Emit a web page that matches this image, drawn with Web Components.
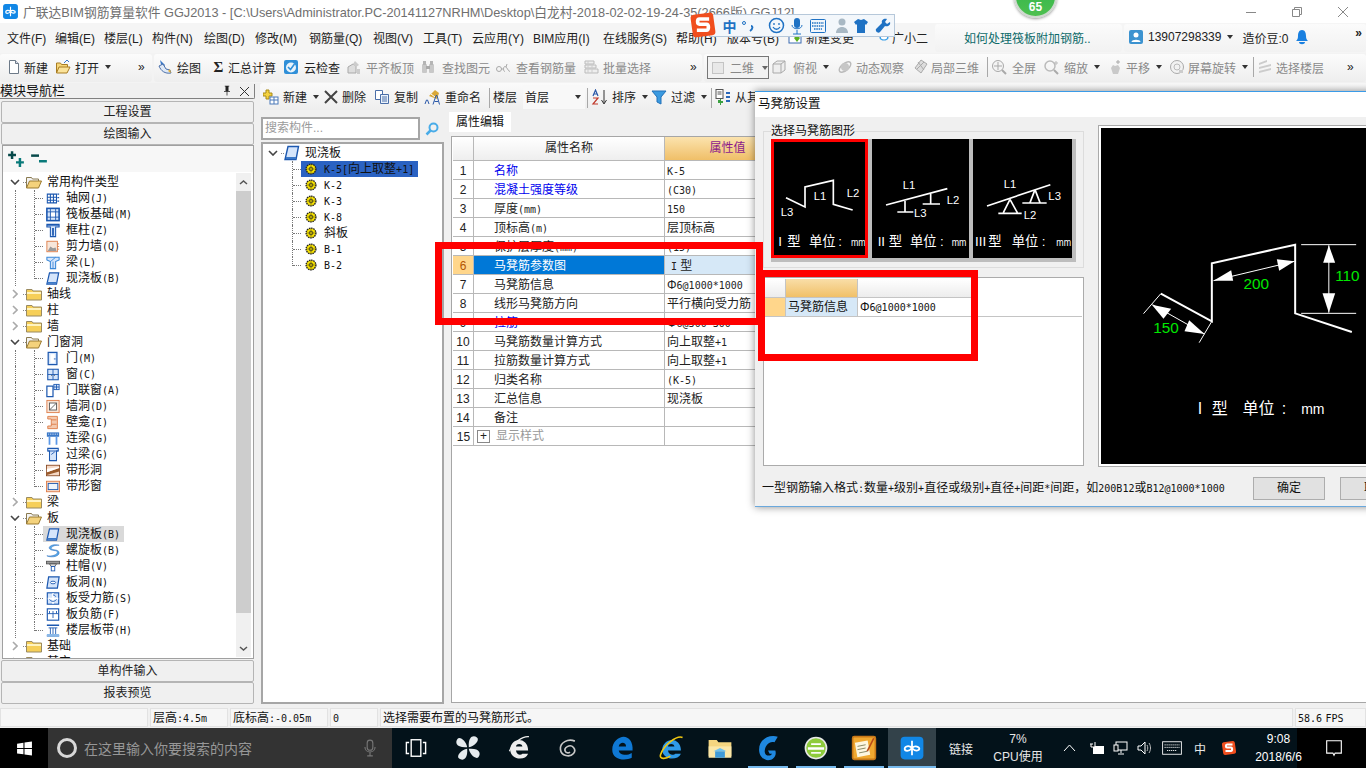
<!DOCTYPE html>
<html lang="zh">
<head>
<meta charset="utf-8">
<title>广联达BIM钢筋算量软件</title>
<style>
    html, body { margin: 0; width: 1366px; height: 768px; overflow: hidden; background: #f0f0f0; }
    body {
        display: grid;
        grid-template-rows: 23px 30px 30px 625px 20px 40px;
        font: 12px "Liberation Sans", "Noto Sans CJK SC", sans-serif;
        color: #222;
        position: relative;
    }
</style>
</head>
<body>
<title-bar></title-bar>
<menu-bar></menu-bar>

<tool-row>
    <tool-chunk style="width:152px;padding-left:6px">
        <tool-btn icon="new" label="新建" w="49" gap="2"></tool-btn>
        <tool-btn icon="open" label="打开" w="83" gap="4" caret></tool-btn>
        <tool-btn label="»" w="14"></tool-btn>
    </tool-chunk>
    <tool-chunk style="width:548px;padding-left:3px;margin-left:2px">
        <tool-btn icon="draw" label="绘图" w="56" gap="4"></tool-btn>
        <tool-btn glyph="Σ" label="汇总计算" w="70" iw="11" gap="4"></tool-btn>
        <tool-btn icon="cloud" label="云检查" w="63" gap="5"></tool-btn>
        <tool-btn icon="align" label="平齐板顶" w="74" gap="4" dim></tool-btn>
        <tool-btn icon="find" label="查找图元" w="75" gap="6" dim></tool-btn>
        <tool-btn icon="glasses" label="查看钢筋量" w="88" gap="5" dim></tool-btn>
        <tool-btn icon="batch" label="批量选择" w="107" gap="4" dim></tool-btn>
        <tool-btn label="»" w="12"></tool-btn>
    </tool-chunk>
    <tool-chunk style="flex:1;padding-left:3px;margin-left:2px">
        <view-combo label="二维"></view-combo>
        <tool-btn icon="cube" label="俯视" w="66" gap="6" caret dim></tool-btn>
        <tool-btn icon="orbit" label="动态观察" w="76" gap="3" dim></tool-btn>
        <tool-btn icon="cube3" label="局部三维" w="72" gap="2" dim></tool-btn>
        <tool-sep></tool-sep>
        <tool-btn icon="full" label="全屏" w="52" gap="5" dim></tool-btn>
        <tool-btn icon="zoom" label="缩放" w="64" gap="5" caret dim></tool-btn>
        <tool-btn icon="pan" label="平移" w="62" gap="3" caret dim></tool-btn>
        <tool-btn icon="rotate" label="屏幕旋转" w="82" gap="3" caret dim></tool-btn>
        <tool-sep></tool-sep>
        <tool-btn icon="floors" label="选择楼层" w="90" gap="3" dim></tool-btn>
        <tool-btn label="»" w="12"></tool-btn>
    </tool-chunk>
</tool-row>

<work-area>
    <nav-panel slot="nav"></nav-panel>
    <tool-row slot="tools" plain style="padding-left:3px">
        <tool-btn icon="add" label="新建" w="60" gap="4" caret></tool-btn>
        <tool-btn icon="del" label="删除" w="51" gap="3"></tool-btn>
        <tool-btn icon="copy" label="复制" w="50" gap="4"></tool-btn>
        <tool-btn icon="rename" label="重命名" w="63" gap="5"></tool-btn>
        <tool-sep></tool-sep>
        <tool-btn label="楼层" w="30"></tool-btn>
        <floor-combo label="首层"></floor-combo>
        <tool-sep></tool-sep>
        <tool-btn icon="sort" label="排序" w="60" iw="18" gap="3" caret></tool-btn>
        <tool-btn icon="filter" label="过滤" w="58" gap="4" caret></tool-btn>
        <tool-sep></tool-sep>
        <tool-btn icon="layer" label="从其" w="44" gap="4"></tool-btn>
    </tool-row>
    <comp-panel slot="comps"></comp-panel>
    <prop-panel slot="props"></prop-panel>
</work-area>

<status-bar></status-bar>
<win-taskbar></win-taskbar>

<score-badge></score-badge>
<ime-bar></ime-bar>
<rebar-dialog></rebar-dialog>
<red-frame box="435,242,328,83"></red-frame>
<red-frame box="758,270,220,91"></red-frame>

<script>
const CJK = '"Noto Sans CJK SC"';

// SimSun style text: latin is half a CJK cell wide
function sim(s) {
    return s.replace(/[\x21-\x7e]+/g, m => `<span class="a">${m}</span>`);
}
const SIM_CSS = `.a { font-family: "DejaVu Sans Mono", monospace; font-size: 10px; }`;

const B = '#1c58b0', L = '#d5e5fb', O = '#dd7a45', G = '#a9a9a9';
const ICONS = {
    new: `<path d="M3.5 1.5h6l3 3v10h-9z" fill="#fff" stroke="#6d7a88"/><path d="M9.5 1.5v3h3" fill="#dde" stroke="#6d7a88"/>`,
    open: `<path d="M1.5 14V4h4l1 1.5h6V8" fill="#f6d67a" stroke="#a87c22"/><path d="M1.5 14l2.500-6h11l-3 6z" fill="#fbe39a" stroke="#a87c22"/><path d="M9 4l3-3 2 2" fill="none" stroke="#3a78c8"/>`,
    draw: `<path d="M3 1l5 5-3 4z" fill="#3a78c8"/><path d="M2 7c2 5 6 8 12 7l-1-3-4-1-3-5z" fill="#dfe9f6" stroke="#4a6ea8"/><path d="M11 12l3 2-1-4z" fill="#e8b030"/>`,
    cloud: `<rect x="1" y="1" width="14" height="14" rx="2" fill="#2f8fd8"/><circle cx="8" cy="8.500" r="5" fill="#e8f3fb"/><path d="M5 8l2.500 2.500L11.500 5" fill="none" stroke="#2f8fd8" stroke-width="1.600"/>`,
    align: `<path d="M2 14V8l5-3 3 2v7z" fill="#ddd" stroke="${G}"/><path d="M9 2l4 4-3 2-3-3z" fill="#ccc"/><path d="M11 10h3v5h-3z" fill="#ccc"/>`,
    find: `<rect x="2" y="5" width="5" height="9" rx="1" fill="#c8c8c8"/><rect x="9" y="5" width="5" height="9" rx="1" fill="#c8c8c8"/><rect x="3" y="2" width="3" height="4" fill="#b5b5b5"/><rect x="10" y="2" width="3" height="4" fill="#b5b5b5"/><rect x="6" y="7" width="4" height="3" fill="#aaa"/>`,
    glasses: `<circle cx="4" cy="10" r="2.500" fill="none" stroke="${G}"/><path d="M10 12.500c-2 0-2-5 0-5s3 5 5 5M6 10h2M12 5l-1 3" fill="none" stroke="${G}"/>`,
    batch: `<path d="M2 2h9v3H2zM2 6h11v3H2zM2 10h13v4H2z" fill="#eee" stroke="#bbb"/><path d="M5 2v12M9 6v8" stroke="#ccc"/>`,
    cube: `<path d="M2 5l4-3h8v9l-4 3H2z" fill="#eee" stroke="${G}"/><path d="M2 5h8v9M10 5l4-3" fill="none" stroke="${G}"/>`,
    orbit: `<ellipse cx="8" cy="8" rx="7" ry="3.500" transform="rotate(-40 8 8)" fill="none" stroke="#bbb" stroke-width="1.500"/><circle cx="8" cy="8" r="4" fill="#c6c6c6"/>`,
    cube3: `<path d="M8 1l6 4-6 9-6-5z" fill="#ddd" stroke="#aaa"/><path d="M5 3l6 8M11 3l-7 7" stroke="#aaa"/>`,
    full: `<circle cx="7" cy="7" r="5.500" fill="#f4f4f4" stroke="${G}"/><path d="M7 3v8M3 7h8" stroke="${G}"/><path d="M11 11l4 4" stroke="${G}" stroke-width="2"/>`,
    zoom: `<circle cx="7" cy="7" r="5" fill="none" stroke="#bbb" stroke-width="1.500"/><path d="M11 11l4 4" stroke="#aaa" stroke-width="2"/><path d="M13 2v4M11 4h4" stroke="#bbb"/>`,
    pan: `<path d="M4 9l2-3 2 1 3-1 2 3-2 6H6z" fill="#c9c9c9"/><path d="M11 1v4M9 3h4" stroke="${G}"/>`,
    rotate: `<circle cx="8" cy="8" r="6.500" fill="#f2f2f2" stroke="${G}"/><circle cx="8" cy="8" r="3" fill="none" stroke="#bbb"/><path d="M10 11h4v3h-4z" fill="#ccc"/>`,
    floors: `<path d="M2 4l8-3v2l-8 3zM2 8l12-3v2L2 10zM2 12l12-3v2l-12 3z" fill="#ccc"/>`,
    add: `<path d="M3 1h3v3h3v3H6v3H3V7H0V4h3z" fill="#f4d240" stroke="#a88a18"/><rect x="7" y="8" width="8" height="7" fill="#fff" stroke="#4a78b8"/><path d="M7 11h8M11 8v7" stroke="#4a78b8"/>`,
    del: `<path d="M2 2l12 12M14 2L2 14" stroke="#444" stroke-width="2"/>`,
    copy: `<path d="M1.500 1.500h7v9h-7z" fill="#fff" stroke="#4a6ea8"/><path d="M6.500 5.500h8v9h-8z" fill="#eaf2fb" stroke="#4a6ea8"/><path d="M8 8h5M8 10h5M8 12h5" stroke="#4a6ea8"/>`,
    rename: `<path d="M5 7l6-6 4 3-2 6z" fill="#d9a838"/><path d="M7 5l4 3" stroke="#fff"/>
        <path d="M1 15l1.500-4h1L5 15M9 15.500l3-9h1l2.500 9M10.500 12.500h3.500" fill="none" stroke="#2a58a8"/>`,
    sort: `<path d="M1 7l2.500-6L6 7M1.800 5h3.400" fill="none" stroke="#2a58a8" stroke-width="1.200"/><path d="M1 9h5L1 15h5" fill="none" stroke="#c0392b" stroke-width="1.200"/><path d="M12 1v13M9.500 11l2.500 4 2.500-4" fill="none" stroke="#333"/>`,
    filter: `<path d="M1 2h14L10 8v7l-4-2V8z" fill="#3a9ae0" stroke="#2270b8"/>`,
    layer: `<rect x="1" y="0.500" width="7" height="9" fill="#fff" stroke="#555"/><path d="M2.500 3h4M2.500 5h4" stroke="#555"/><path d="M3 11h2v-1h1v2h2v2H6v2H5v-2H3z" fill="#3aa040"/><path d="M11 3h4v2h-4zM11 7h4v2h-4zM11 11h4v2h-4z" fill="#2a68b8"/>`,
    folderOpen: `<path d="M0.500 14V3.500h5l1 1.500h6v2" fill="#f3f3f3" stroke="#8a7a50"/><path d="M0.500 14l3-7h12l-3 7z" fill="#f4d27c" stroke="#9a7a30"/>`,
    folder: `<path d="M0.500 14V3.500h5.500l1 1.500h8.500v9z" fill="#f6cf58" stroke="#9a8a60"/><path d="M1 6h14v2H1z" fill="#fff3bf"/>`,
    grid: `<path d="M1.500 3h10.500v10H1.500zM1.500 6.500h10.500M1.500 10h10.500M5 3v10M8.500 3v10" fill="none" stroke="${B}" stroke-width="1.200"/><path d="M13 3h2M13 7h2M13 11h2" stroke="${B}" stroke-width="1.500"/>`,
    raft: `<rect x="1" y="1" width="14" height="14" fill="${L}" stroke="${B}" stroke-width="1.800"/><rect x="5" y="5" width="6" height="6" fill="#fff" stroke="${B}"/><path d="M1 5h4M11 5h4M1 11h4M11 11h4M5 1v4M11 1v4M5 11v4M11 11v4" stroke="${B}"/>`,
    column: `<path d="M1 1h14v3H11v11H5V4H1z" fill="${L}" stroke="${B}" stroke-width="1.200"/><path d="M1 2.500h14" stroke="${B}"/><path d="M7 5h2v9H7z" fill="${B}"/>`,
    wall: `<rect x="1" y="2" width="12" height="12" fill="#f7e6da" stroke="${O}"/><path d="M2 13l3-5 3 2 3-1 1 4z" fill="#9a9a9a"/><path d="M13 5h2M13 8h2M13 11h2" stroke="${O}"/>`,
    beam: `<path d="M1 2h14v3l-4 2v8H5V7L1 5z" fill="${L}" stroke="#3a88d8" stroke-width="1.200"/><path d="M5 7l6-5M8 7v8" stroke="#3a88d8"/>`,
    slab: `<path d="M4 1.500h10.500L12 14.500H1z" fill="${L}" stroke="${B}" stroke-width="1.400"/><path d="M2 13h10" stroke="#3a78c8" stroke-width="2"/>`,
    door: `<rect x="2.500" y="1" width="10" height="14" fill="${L}" stroke="${B}" stroke-width="1.400"/><rect x="5" y="3" width="5" height="10" fill="#fff"/><rect x="9" y="8" width="2" height="1" fill="${B}"/>`,
    win: `<rect x="2" y="2" width="12" height="12" fill="${L}" stroke="${B}" stroke-width="1.200"/><path d="M8 2v12M2 8h12" stroke="${B}"/><path d="M6 9h1M9 9h1" stroke="#333"/>`,
    doorwin: `<rect x="1" y="3" width="7" height="12" fill="#fff" stroke="${B}" stroke-width="1.400"/><rect x="9" y="1" width="6" height="6" fill="${L}" stroke="${B}"/><path d="M12 1v6M9 4h6" stroke="${B}"/>`,
    hole: `<rect x="1" y="1" width="14" height="14" fill="#f8e4d6" stroke="${O}"/><rect x="4" y="4" width="8" height="8" fill="#fff" stroke="#555"/><path d="M4 12l8-8" stroke="#555"/>`,
    niche: `<path d="M2 1h11v14H2v-3h4V4H2z" fill="#f4c9ae" stroke="${O}"/><path d="M6 5h6M6 10h6" stroke="${O}"/>`,
    lbeam: `<rect x="1" y="1" width="14" height="5" fill="#3a78c8"/><path d="M2.500 3h11" stroke="#fff" stroke-dasharray="1 1"/><path d="M4 6v9M12 6v9" stroke="#5a98e8" stroke-width="2"/>`,
    lintel: `<path d="M2 1h12v3h-2v11H4V4H2z" fill="${L}" stroke="${B}" stroke-width="1.200"/><path d="M2 4h12M6 8l4-3" stroke="${B}"/>`,
    shole: `<rect x="0.500" y="2" width="15" height="12" fill="#f5d8c4" stroke="#884822"/><path d="M1 10l14-5v4L1 13z" fill="#9a5a2a"/><path d="M1 6l14-2v1L1 10z" fill="#fff"/>`,
    swin: `<rect x="0.500" y="2" width="15" height="12" fill="#f3d6c6" stroke="${O}"/><rect x="2.500" y="4.500" width="11" height="7" fill="#eef4fc" stroke="${B}"/>`,
    spiral: `<path d="M15 2C9 0 2 3 4 6s9 1 9 4-7 5-12 4c3 2 13 2 14-3S4 8 6 5s6-3 9-3z" fill="#58a8e8" stroke="#2a70c0" stroke-width=".6"/>`,
    cap: `<rect x="0.500" y="2" width="15" height="3" fill="#999" stroke="#555"/><path d="M4 5h8l-2 3H6z" fill="#ddd" stroke="#555"/><rect x="6" y="8" width="4" height="5" fill="#fff" stroke="#1c58b0"/>`,
    slabhole: `<path d="M3 1.500h12L13 14.500H1z" fill="${L}" stroke="${B}" stroke-width="1.400"/><ellipse cx="8" cy="8" rx="3" ry="1.500" fill="#fff" stroke="${B}"/>`,
    srebar: `<rect x="1.500" y="1.500" width="13" height="13" fill="${L}" stroke="${B}" stroke-width="1.300"/><path d="M2 8h12M8 2v12" stroke="#fff" stroke-width="2"/><path d="M4 9c2 3 6 3 8 0M8 4c2 0 3 1 3 2" fill="none" stroke="${B}"/>`,
    nrebar: `<rect x="1.500" y="1.500" width="13" height="13" fill="#fff" stroke="${B}" stroke-width="1.300"/><path d="M2 7h12M8 4v8M4 4v3M12 4v3" fill="none" stroke="${B}"/>`,
    band: `<path d="M1 2h14M1 14h14" stroke="${B}" stroke-width="1.600"/><path d="M3 5h10M5 5v7M8 5v7M11 5v7" stroke="${B}"/><rect x="1" y="12" width="14" height="3" fill="#8ab8e8"/>`,
    gear: `<circle cx="8" cy="8" r="6.500" fill="#f5e000" stroke="#222" stroke-width="1.800" stroke-dasharray="2 1"/><circle cx="8" cy="8" r="2.500" fill="none" stroke="#222"/><path d="M8 1v14M1 8h14" stroke="#222" stroke-width=".5"/>`,
    win10: `<path d="M1 3.500l6-.9v5H1zM8 2.400l7-1v6.200H8zM1 8.500h6v5l-6-.9zM8 8.500h7v6.200l-7-1z" fill="#fff"/>`,
    mic: `<rect x="5.500" y="1" width="5" height="9" rx="2.500" fill="none" stroke="#777"/><path d="M3.500 7c0 6 9 6 9 0M8 12v3M5.500 15h5" fill="none" stroke="#777"/>`,
    taskview: `<rect x="4.500" y="2" width="7" height="12" fill="none" stroke="#fff"/><path d="M3 4H1v8h2M13 4h2v8h-2" fill="none" stroke="#fff"/>`,
    fan: `<path d="M7.500 7.500C7 4 3 .5 1.500 2.500S.5 8 7.500 7.500zM8.500 7.500C12 7 15.500 3 13.500 1.500S8 .5 8.500 7.500zM7.500 8.500C4 9 .5 13 2.500 14.500S8 15.500 7.500 8.500zM8.500 8.500C9 12 13 15.500 14.500 13.500S15.500 8 8.500 8.500z" fill="#e6ebee"/>`,
    ie: `<path d="M2 9.500h11C13 5 10 3 7.500 3 4.500 3 2 5.500 2 9c0 3.500 3 5.500 6 5.500 2.500 0 4-1 5-3H9.500c-1 1.200-3.500 1-4-2zM5.500 7c.5-2 3.500-2 4 0z" fill="#eee"/><path d="M13.500 1c-4-.5-10 4-12 9" fill="none" stroke="#eee" stroke-width=".8"/>`,
    swirl: `<path d="M13 3C8 1 2 4 2.500 9s7 6 9.500 3-1-7-4.500-5-1 6 2 4" fill="none" stroke="#c8c8c8" stroke-width="1.200"/>`,
    edge: `<path d="M2 9c0-5 4-8 7-8s6 3 5.500 8.500H6c.5 3 5 3.500 8 1.500v3c-4 2-12 1.500-12-5zM6 7h4.500c0-3-4-3-4.500 0z" fill="#0f78d4"/>`,
    ie2: `<path d="M2 9.500h11.500C13.500 5 10.500 3 8 3 5 3 2 5.500 2 9c0 3.500 3 5.500 6 5.500 2.500 0 4.500-1 5.500-3H10c-1 1.200-4 1-4.500-2zM5.500 7c.5-2 3.500-2 4 0z" fill="#2f9ae8"/><path d="M14.500 1.500C11 0 3 6 1 12c-1 3 3 3 6 1" fill="none" stroke="#f2c811"/>`,
    explorer: `<path d="M1 3h5l1 1.500h8V13H1z" fill="#f4d580"/><path d="M1 7h14v7H1z" fill="#fbe7a8"/><path d="M5 10h6v4H5z" fill="#3f9ad8"/><path d="M4 10l4-2 4 2z" fill="#6fc0ee"/>`,
    gapp: `<path d="M14 1C8-.5 2.500 3 2.500 9c0 4 3 6.500 5.500 6.500 3.500 0 5.500-3 4.500-6H8l1 2h1.500c-1 2-5 1.500-4.500-2S9 3.500 12 4.500z" fill="#1f88e0"/>`,
    greenie: `<circle cx="8" cy="8" r="6.500" fill="#8ecb3c" stroke="#e8e8e8"/><path d="M3 7.500h10v1.500H3zM5 5h6v1.200H5z" fill="#fff"/><path d="M5 11h6" stroke="#fff"/>`,
    notes: `<rect x="1" y="1" width="14" height="14" rx="1" fill="#f0a830" stroke="#c87818"/><rect x="3" y="4" width="8" height="9" fill="#fdf6e0" transform="rotate(-10 7 8)"/><path d="M4 7l5-1M4 9l5-1M5 11l5-1" stroke="#886" stroke-width=".6"/><path d="M14 2l-4 8" stroke="#b84a18"/>`,
    ggj: `<rect x="1" y="1" width="14" height="14" rx="2.500" fill="#1187e6"/><path d="M8 3.500v9M8 8c-2-2-4.500-1-4.500.5S6 10.500 8 8c2 2.500 4.500 1.500 4.500.5S10 6 8 8z" fill="none" stroke="#fff" stroke-width="1.100"/>`,
    battery: `<rect x="4" y="6" width="11" height="8" fill="#fff"/><path d="M6 2v4M2 4v3h4M1 4h3" stroke="#fff"/>`,
    network: `<rect x="3" y="2" width="11" height="8" fill="none" stroke="#fff"/><rect x="1" y="5" width="4" height="6" fill="#0a1418" stroke="#fff"/><path d="M8 10v3M5 14h6" stroke="#fff"/>`,
    speaker: `<path d="M2 6h3l4-4v12l-4-4H2z" fill="none" stroke="#fff"/><path d="M11 5c1 2 1 4 0 6M13 3c2 3 2 7 0 10" fill="none" stroke="#bbb"/>`,
    keyboard: `<rect x="0.500" y="3" width="15" height="10" fill="none" stroke="#fff" stroke-width=".7"/><path d="M2 5.500h12M2 7.500h12M4 10h8" stroke="#fff" stroke-width=".7" stroke-dasharray="1 .6"/>`,
    sogou: `<rect x="1.500" y="1.500" width="13" height="13" rx="2" fill="#f04e1e" transform="rotate(-8 8 8)"/><path d="M11.500 4.500H6c-1.500 0-1.500 3 0 3h4c1.500 0 1.500 3.500 0 3.500H4.500" fill="none" stroke="#fff" stroke-width="2"/>`,
    note: `<path d="M1.500 1.500h13v11H9l-1 2-1-2H1.500z" fill="none" stroke="#fff"/>`,
    user: `<rect x="1" y="1" width="14" height="14" rx="2" fill="#3c93d0"/><circle cx="8" cy="6" r="2.500" fill="#fff"/><path d="M3.500 13c0-3 9-3 9 0z" fill="#fff"/>`,
    bell: `<path d="M8 1c-3 0-4 3-4 6s-1 4-2 5h12c-1-1-2-2-2-5s-1-6-4-6z" fill="#1a80e0"/><path d="M5 13h6c0 3-6 3-6 0z" fill="#1a80e0"/>`,
    change: `<rect x="1" y="2" width="12" height="12" fill="#fff" stroke="#3a6ab0"/><path d="M9 6l3 3-3 4-3-4z" fill="#5ab020"/>`,
    robot: `<path d="M2 5c0-5 12-5 12 0v4c0 5-12 5-12 0z" fill="#3aa0e8"/><path d="M4 6h8v3c0 3-8 3-8 0z" fill="#fff"/>`,
    search: `<circle cx="9.500" cy="6.500" r="4" fill="none" stroke="#49ace8" stroke-width="2"/><path d="M6.500 9.500l-4 4" stroke="#49ace8" stroke-width="2.500"/>`,
    plusplus: `<path d="M4.500 1v7M1 4.500h7" stroke="#07494a" stroke-width="2.200"/><path d="M11.500 7v8M8 11h7" stroke="#0a7a7a" stroke-width="2.200"/>`,
    minusminus: `<path d="M1 5h7" stroke="#07494a" stroke-width="2.200"/><path d="M8 10h7" stroke="#0a7a7a" stroke-width="2.200"/>`,
    pin: `<path d="M5 1h6v1H10v6h2v1H8.500v5h-1V9H4V8h2V2H5z" fill="#222"/>`
};

function icon(name, w = 16, h = w) {
    return `<svg viewBox="0 0 16 16" width="${w}" height="${h}" aria-hidden="true">${ICONS[name] || ''}</svg>`;
}

class Base extends HTMLElement {
    constructor() {
        super();
        this.attachShadow({ mode: 'open' });
    }
    connectedCallback() {
        this.shadowRoot.innerHTML = this.markup();
    }
}

class TitleBar extends Base {
    markup() {
        return `<style>
            :host { display: flex; align-items: center; background: #fff; color: #6f6f6f; overflow: hidden; white-space: nowrap; }
            .ico { margin: 0 4px 0 2px; display: flex; }
            .t { flex: 1; font-size: 12.750px; }
            .c { width: 46px; height: 23px; display: flex; align-items: center; justify-content: center; }
            svg { display: block; }
        </style>
        <span class="ico">${icon('ggj', 17)}</span>
        <span class="t">广联达BIM钢筋算量软件 GGJ2013 - [C:\\Users\\Administrator.PC-20141127NRHM\\Desktop\\白龙村-2018-02-02-19-24-35(2666版).GGJ12]</span>
        <span class="c"><svg width="10" height="10"><path d="M0 5.500h10" stroke="#888"/></svg></span>
        <span class="c"><svg width="10" height="10"><path d="M.5 2.500h7v7h-7zM2.500 2.500v-2h7v7h-2" fill="none" stroke="#888"/></svg></span>
        <span class="c"><svg width="10" height="10"><path d="M0 0l10 10M10 0L0 10" stroke="#888"/></svg></span>`;
    }
}

class MenuBar extends Base {
    markup() {
        const items = [['文件(F)', 48], ['编辑(E)', 49], ['楼层(L)', 48], ['构件(N)', 52], ['绘图(D)', 51], ['修改(M)', 54],
            ['钢筋量(Q)', 64], ['视图(V)', 50], ['工具(T)', 49], ['云应用(Y)', 61], ['BIM应用(I)', 70], ['在线服务(S)', 73],
            ['帮助(H)', 51], ['版本号(B)', 61]];
        return `<style>
            :host { display: flex; align-items: center; background: #f5f5f5; padding-left: 7px; white-space: nowrap; color: #222; }
            span { flex: none; }
            svg { display: block; }
            .lb { padding-bottom: 2px; }
            .i { display: flex; align-items: center; gap: 2px; padding-bottom: 2px; }
            .tip, .me { height: 28px; border-radius: 3px; background: linear-gradient(#fbfbfb, #f2f2f2); display: flex; align-items: center; box-sizing: border-box; padding-bottom: 2px; }
            .tip { width: 187px; margin-left: 7px; color: #0c6a6a; padding-left: 29px; }
            .me { flex: 1; margin-left: 2px; padding-left: 4px; position: relative; }
            .caret { width: 0; height: 0; border: 3px solid transparent; border-top: 4px solid #333; border-bottom: 0; margin: 0 9px 0 6px; }
            .more { position: absolute; right: 4px; top: 2px; line-height: 14px; font-weight: 700; }
        </style>
        ${items.map(([t, w]) => `<span class="lb" style="width:${w}px">${t}</span>`).join('')}
        <span class="i" style="width:90px">${icon('change', 16)}新建变更</span>
        <span class="i" style="width:50px">${icon('robot', 12)}广小二</span>
        <span class="tip">如何处理筏板附加钢筋..</span>
        <span class="me">${icon('user', 16)}<span style="margin-left:4px">13907298339</span><i class="caret"></i>造价豆:0<span style="margin-left:6px">${icon('bell', 16)}</span><span class="more">»</span></span>`;
    }
}

class ToolRow extends Base {
    markup() {
        const plain = this.hasAttribute('plain');
        return `<style>
            :host { display: flex; align-items: ${plain ? 'center' : 'flex-start'}; white-space: nowrap; overflow: hidden; box-sizing: border-box;
                background: ${plain ? 'linear-gradient(#fafafa, #eeeeee)' : '#f3f3f3'}; ${plain ? 'border-radius: 3px 0 0 0;' : 'padding-top: 1px;'} }
        </style><slot></slot>`;
    }
}

class ToolChunk extends Base {
    markup() {
        return `<style>
            :host { display: flex; align-items: flex-start; flex: none; box-sizing: border-box; height: 28px; border-radius: 3px; background: linear-gradient(#fcfcfc, #eeeeee); overflow: hidden; }
        </style><slot></slot>`;
    }
}

class ToolBtn extends Base {
    markup() {
        const w = this.getAttribute('w');
        const iw = this.getAttribute('iw') || 16;
        const gap = this.getAttribute('gap') || 0;
        const ico = this.getAttribute('icon');
        const glyph = this.getAttribute('glyph');
        const caret = this.hasAttribute('caret');
        const dim = this.hasAttribute('dim');
        return `<style>
            :host { display: flex; align-items: center; flex: none; width: ${w}px; height: 26px; color: ${dim ? '#8a8a8a' : '#222'}; overflow: hidden; }
            .i { width: ${iw}px; flex: none; display: flex; align-items: center; justify-content: center; margin-right: ${gap}px; font: 700 15px "Liberation Serif", serif; }
            svg { display: block; }
            .c { width: 0; height: 0; border: 3px solid transparent; border-top: 4px solid #333; border-bottom: 0; margin-left: 6px; }
        </style>
        ${ico ? `<span class="i">${icon(ico, +iw, 16)}</span>` : ''}
        ${glyph ? `<span class="i">${glyph}</span>` : ''}
        <span>${this.getAttribute('label')}</span>
        ${caret ? '<i class="c"></i>' : ''}`;
    }
}

class ToolSep extends Base {
    markup() {
        return `<style>:host { display: block; flex: none; width: 1px; height: 20px; background: #a8a8a8; margin: 3px 3px 0 2px; }</style>`;
    }
}

class ViewCombo extends Base {
    markup() {
        return `<style>
            :host { display: flex; align-items: center; flex: none; box-sizing: border-box; width: 62px; height: 23px; margin: 2px 2px 0 0; border: 1px solid #777; color: #888; background: #f2f2f2; }
            i { width: 13px; height: 12px; margin: 0 6px 0 4px; background: #e8e8e8; border: 1px solid #c4c4c4; box-sizing: border-box; }
            b { width: 0; height: 0; border: 3px solid transparent; border-top: 4px solid #666; border-bottom: 0; margin-left: 8px; }
        </style><i></i><span>${this.getAttribute('label')}</span><b></b>`;
    }
}

class FloorCombo extends Base {
    markup() {
        return `<style>
            :host { display: flex; align-items: center; flex: none; box-sizing: border-box; width: 62px; height: 24px; background: #f8f8f8; padding-left: 2px; }
            b { width: 0; height: 0; border: 3px solid transparent; border-top: 4px solid #333; border-bottom: 0; margin-left: auto; margin-right: 4px; }
        </style><span>${this.getAttribute('label')}</span><b></b>`;
    }
}

class WorkArea extends Base {
    markup() {
        return `<style>
            :host { display: grid; grid-template-columns: 255px 5px 187px 1fr; grid-template-rows: 27px 594px; min-height: 0; overflow: hidden; background: #f0f0f0; }
            ::slotted([slot=nav]) { grid-column: 1; grid-row: 1 / 3; }
            ::slotted([slot=tools]) { grid-column: 3 / 5; grid-row: 1; }
            ::slotted([slot=comps]) { grid-column: 3; grid-row: 2; }
            ::slotted([slot=props]) { grid-column: 4; grid-row: 2; }
        </style>
        <slot name="nav"></slot><slot name="tools"></slot><slot name="comps"></slot><slot name="props"></slot>`;
    }
}

class NavPanel extends Base {
    markup() {
        const btn = t => `<div class="btn">${t}</div>`;
        return `<style>
            :host { display: flex; flex-direction: column; min-height: 0; box-sizing: border-box; padding-top: 1px; }
            .head { height: 14px; display: flex; align-items: center; font-size: 13px; line-height: 14px; border-bottom: 1px solid #808080; border-right: 1px solid #808080; border-radius: 0 0 2px 0; overflow: hidden; margin-bottom: 2px; flex: none; }
            .head span { flex: 1; color: #111; }
            .head svg { display: block; margin-right: 4px; }
            .btn { flex: none; margin: 0 1px; text-align: center; background: #f0f0f0; border: 1px solid #b5b5b5; height: 20px; line-height: 20px; color: #222; border-radius: 2px; }
            .box { flex: 1; min-height: 0; margin: 0 1px 1px 2px; border: 1px solid #a0a0a0; display: flex; flex-direction: column; }
            .tools { height: 26px; background: #f7f7f7; display: flex; align-items: center; gap: 5px; padding-left: 4px; flex: none; }
            .tools svg { display: block; }
            comp-tree { flex: 1; min-height: 0; }
        </style>
        <div class="head"><span>模块导航栏</span>${icon('pin', 12)}<svg width="9" height="9" style="margin:0 5px 0 3px"><path d="M0 0l9 9M9 0L0 9" stroke="#333"/></svg></div>
        ${btn('工程设置')}${btn('绘图输入')}
        <div class="box">
            <div class="tools">${icon('plusplus', 18)}${icon('minusminus', 18)}</div>
            <comp-tree which="nav" style="--ox:4px"></comp-tree>
        </div>
        ${btn('单构件输入')}${btn('报表预览')}`;
    }
}

const NAV_TREE = [
    ['open', '常用构件类型', [['grid', '轴网(J)'], ['raft', '筏板基础(M)'], ['column', '框柱(Z)'], ['wall', '剪力墙(Q)'], ['beam', '梁(L)'], ['slab', '现浇板(B)']]],
    ['closed', '轴线'], ['closed', '柱'], ['closed', '墙'],
    ['open', '门窗洞', [['door', '门(M)'], ['win', '窗(C)'], ['doorwin', '门联窗(A)'], ['hole', '墙洞(D)'], ['niche', '壁龛(I)'], ['lbeam', '连梁(G)'], ['lintel', '过梁(G)'], ['shole', '带形洞'], ['swin', '带形窗']]],
    ['closed', '梁'],
    ['open', '板', [['slab', '现浇板(B)', 'grey'], ['spiral', '螺旋板(B)'], ['cap', '柱帽(V)'], ['slabhole', '板洞(N)'], ['srebar', '板受力筋(S)'], ['nrebar', '板负筋(F)'], ['band', '楼层板带(H)']]],
    ['closed', '基础'], ['closed', '其它']
];
const COMP_TREE = [
    ['slab', '现浇板', [['gear', 'K-5[向上取整+1]', 'blue'], ['gear', 'K-2'], ['gear', 'K-3'], ['gear', 'K-8'], ['gear', '斜板'], ['gear', 'B-1'], ['gear', 'B-2']], 'solo']
];

class CompTree extends Base {
    row(kind, label, kids, solo) {
        const open = !!kids;
        const ic = kind === 'open' ? 'folderOpen' : kind === 'closed' ? 'folder' : kind;
        const chev = open
            ? '<svg width="10" height="6"><path d="M1 1l4 4 4-4" fill="none" stroke="#444" stroke-width="1.600"/></svg>'
            : '<svg width="6" height="10"><path d="M1 1l4 4-4 4" fill="none" stroke="#aaa" stroke-width="1.600"/></svg>';
        let html = `<div class="r"><span class="ch">${chev}</span><span class="d"></span><span class="ic">${icon(ic)}</span><span class="tx" style="margin-left:5px">${sim(label)}</span></div>`;
        (kids || []).forEach((k, i) => {
            const last = i === kids.length - 1;
            const cls = k[2] ? ` ${k[2]}` : '';
            const size = k[0] === 'gear' ? 12 : 15;
            html += `<div class="r"><span class="g1${solo ? ' none' : ''}"></span><span class="g2${last ? ' last' : ''}"><i></i></span>
                <span class="it${cls}"><span class="ic2">${icon(k[0], size)}</span><span class="tx">${sim(k[1])}</span></span></div>`;
        });
        return html;
    }
    markup() {
        const nav = this.getAttribute('which') === 'nav';
        const data = nav ? NAV_TREE : COMP_TREE;
        return `<style>
            :host { display: flex; background: #fff; overflow: hidden; color: #111; }
            ${SIM_CSS}
            .list { flex: 1; min-width: 0; padding: ${nav ? 2 : 1}px 0 0 var(--ox, 0); overflow: hidden; }
            .r { display: flex; align-items: center; height: 16px; white-space: nowrap; line-height: 16px; }
            .ch { width: 15px; flex: none; display: flex; justify-content: center; }
            .d { width: 3px; margin-left: 1px; flex: none; border-top: 1px dotted #888; }
            .ic { width: 16px; flex: none; display: flex; }
            svg { display: block; }
            .g1 { flex: none; width: 18px; height: 16px; margin-left: 8px; border-left: 1px dotted #777; }
            .g1.none { border-color: transparent; }
            .g2 { flex: none; width: 12px; height: 16px; box-sizing: border-box; border-left: 1px dotted #777; align-self: flex-start; }
            .g2 i { display: block; height: 8px; border-bottom: 1px dotted #777; margin-right: 3px; }
            .g2.last { height: 9px; }
            .it { display: flex; align-items: center; height: 16px; margin-left: -3px; padding: 0 4px 0 3px; }
            .it.grey { background: #d9d9d9; }
            .it.blue { background: #2a62c2; }
            .ic2 { width: 14px; flex: none; display: flex; justify-content: center; margin-right: 6px; }
            .sb { width: 15px; flex: none; margin: 1px 2px 1px 0; background: #f0f0f0; display: flex; flex-direction: column; align-items: center; }
            .ar { height: 18px; flex: none; display: flex; align-items: center; }
            .th { height: 422px; flex: none; width: 100%; background: #cdcdcd; }
            .sp { flex: 1; }
        </style>
        <div class="list">${data.map(d => this.row(d[0], d[1], d[2], d[3])).join('')}</div>
        ${nav ? `<div class="sb"><span class="ar"><svg width="9" height="5"><path d="M1 4l3.500-3L8 4" fill="none" stroke="#555" stroke-width="1.500"/></svg></span><div class="th"></div><div class="sp"></div><span class="ar"><svg width="9" height="5"><path d="M1 1l3.500 3L8 1" fill="none" stroke="#555" stroke-width="1.500"/></svg></span></div>` : ''}`;
    }
}

class CompPanel extends Base {
    markup() {
        return `<style>
            :host { display: flex; flex-direction: column; min-height: 0; padding: 0 3px 0 1px; box-sizing: border-box; }
            .s { height: 23px; margin-top: 7px; display: flex; flex: none; margin-bottom: 2px; }
            .in { width: 153px; border: 2px solid #a6a6a6; background: #fff; color: #9b9b9b; line-height: 19px; padding-left: 2px; font-size: 12px; }
            .go { flex: 1; display: flex; align-items: center; justify-content: center; }
            comp-tree { flex: 1; min-height: 0; border: 2px solid #a6a6a6; --ox: 2px; }
        </style>
        <div class="s"><div class="in">搜索构件...</div><div class="go">${icon('search', 16)}</div></div>
        <comp-tree which="comps"></comp-tree>`;
    }
}

const PROPS = [
    ['名称', 'K-5', 'b'], ['混凝土强度等级', '(C30)', 'b'], ['厚度(mm)', '150'], ['顶标高(m)', '层顶标高'],
    ['保护层厚度(mm)', '(15)'], ['马凳筋参数图', 'I 型', 's'], ['马凳筋信息', 'Φ6@1000*1000'], ['线形马凳筋方向', '平行横向受力筋'],
    ['拉筋', 'Φ6@300*300', 'b'], ['马凳筋数量计算方式', '向上取整+1'], ['拉筋数量计算方式', '向上取整+1'], ['归类名称', '(K-5)'],
    ['汇总信息', '现浇板'], ['备注', ''], ['显示样式', '', 'g']
];

class PropPanel extends Base {
    markup() {
        const rows = PROPS.map(([n, v, f], i) => {
            const cls = f || '';
            return `<div class="c idx ${cls}">${i + 1}</div>
                <div class="c nm ${cls}">${f === 'g' ? '<i class="pl">+</i>' : ''}${sim(n)}</div>
                <div class="c val ${cls}">${sim(v)}</div>`;
        }).join('');
        return `<style>
            :host { display: flex; flex-direction: column; min-height: 0; box-sizing: border-box; padding: 2px 0 1px 1px; color: #222; }
            ${SIM_CSS}
            .tabs { height: 24px; flex: none; padding-left: 1px; }
            .tab { width: 62px; height: 20px; background: #fff; line-height: 20px; text-align: center; color: #111; }
            .body { flex: 1; min-height: 0; margin-left: 3px; background: #fff; border-top: 1px solid #a6a6a6; border-left: 1px solid #a6a6a6; border-bottom: 1px solid #a6a6a6; padding: 0 0 0 1px; }
            .g { display: grid; grid-template-columns: 21px 191px 200px; grid-auto-rows: 19px; }
            .c { border-right: 1px solid #b8b8b8; border-bottom: 1px solid #b8b8b8; box-sizing: border-box; line-height: 20px; white-space: nowrap; overflow: hidden; }
            .hc { height: 24px; line-height: 23px; text-align: center; background: linear-gradient(#fff, #eee); border-right: 1px solid #b8b8b8; border-bottom: 1px solid #b8b8b8; box-sizing: border-box; }
            .hv { background: linear-gradient(#fbe3ae, #f0bf68); color: #8b1a8b; padding-right: 74px; }
            .hg { display: grid; grid-template-columns: 21px 191px 200px; }
            .idx { text-align: center; background: #fff; }
            .nm { padding-left: 20px; }
            .val { padding-left: 2px; }
            .nm.b { color: #0000ee; }
            .nm.s { background: #0078d7; color: #fff; }
            .val.s { background: #d6e8f7; padding-left: 6px; }
            .idx.s { background: #ffd68b; color: #b35400; }
            .nm.g { color: #999; padding-left: 3px; display: flex; align-items: center; }
            .pl { width: 11px; height: 11px; border: 1px solid #888; color: #222; font-style: normal; line-height: 10px; text-align: center; margin-right: 6px; }
        </style>
        <div class="tabs"><div class="tab">属性编辑</div></div>
        <div class="body">
            <div class="hg"><div class="hc"></div><div class="hc">属性名称</div><div class="hc hv">属性值</div></div>
            <div class="g">${rows}</div>
        </div>`;
    }
}

class StatusBar extends Base {
    markup() {
        const cell = (w, t) => `<div class="s" style="width:${w}px">${sim(t)}</div>`;
        return `<style>
            :host { display: flex; gap: 2px; background: #f0f0f0; color: #111; white-space: nowrap; }
            ${SIM_CSS}
            .s { box-sizing: border-box; height: 19px; line-height: 19px; padding-left: 2px; background: #f6f6f6; border: 1px solid #e2e2e2; flex: none; overflow: hidden; }
        </style>
        ${cell(148, '')}${cell(78, '层高:4.5m')}${cell(98, '底标高:-0.05m')}${cell(48, '0')}${cell(913, '选择需要布置的马凳筋形式。')}${cell(71, '58.6 FPS')}`;
    }
}

class WinTaskbar extends Base {
    markup() {
        const apps = [['fan', 2], ['ie', 4], ['swirl', 0], ['edge', 6], ['ie2', 2], ['explorer', 0], ['gapp', 0, 1], ['greenie', 0, 1], ['notes', 0, 1], ['ggj', 0, 2]];
        const tray = [['battery', 26, 16], ['network', 22, 16], ['speaker', 24, 16], ['keyboard', 32, 20], ['', 24], ['sogou', 34, 16]];
        return `<style>
            :host { display: flex; align-items: stretch; background: linear-gradient(90deg, #03121a 0, #03121a 1297px, #000 1297px); color: #fff; white-space: nowrap; overflow: hidden; }
            svg { display: block; }
            .st { width: 48px; flex: none; background: #000; display: flex; align-items: center; justify-content: center; }
            .se { width: 344px; flex: none; background: #333; display: flex; align-items: center; color: #979797; font-size: 14px; }
            .ring { width: 14px; height: 14px; border: 3px solid #d8d8d8; border-radius: 50%; margin: 0 7px 0 9px; }
            .se .m { margin-left: auto; margin-right: 13px; }
            .tv { width: 48px; flex: none; display: flex; align-items: center; justify-content: center; }
            .ap { width: 48px; flex: none; display: flex; align-items: center; justify-content: center; box-sizing: border-box; position: relative; }
            .ap.u1::after, .ap.u2::after { content: ""; position: absolute; left: 4px; right: 4px; bottom: 0; height: 2px; background: #76b9ed; }
            .ap.u2 { background: #33424a; }
            .ap.u2::after { left: 0; right: 0; }
            .tc { flex: none; text-align: center; display: flex; align-items: center; justify-content: center; color: #e8e8e8; }
            .two { flex-direction: column; line-height: 18px; }
        </style>
        <div class="st">${icon('win10', 17)}</div>
        <div class="se"><span class="ring"></span>在这里输入你要搜索的内容<span class="m">${icon('mic', 18)}</span></div>
        <div class="tv" style="margin-right:2px">${icon('taskview', 22)}</div>
        ${apps.map(([n, m, u]) => `<div class="ap ${u ? 'u' + u : ''}" style="margin-left:${m}px">${icon(n, n === 'swirl' ? 22 : 26)}</div>`).join('')}
        <div class="tc" style="width:50px">链接</div>
        <div class="tc two" style="width:64px"><span>7%</span><span>CPU使用</span></div>
        <div class="tc" style="width:29px;margin-left:5px"><svg width="13" height="8"><path d="M1 7l5.500-6L12 7" fill="none" stroke="#fff"/></svg></div>
        ${tray.map(([n, w, s]) => `<div class="tc" style="width:${w}px">${n ? icon(n, s) : '中'}</div>`).join('')}
        <div class="tc two" style="width:65px;color:#fff"><span>9:08</span><span>2018/6/6</span></div>
        <div class="tc" style="width:46px">${icon('note', 18)}</div>`;
    }
}

class ScoreBadge extends Base {
    markup() {
        return `<style>
            :host { position: absolute; left: 1014px; top: -25px; width: 43px; height: 43px; border-radius: 50%; box-sizing: border-box;
                background: linear-gradient(#2db24a, #4dc04f); border: 2px solid #cfd8cf; box-shadow: 0 1px 3px rgba(0,0,0,.4);
                color: #fff; font-weight: 700; font-size: 12px; display: flex; align-items: flex-end; justify-content: center; padding-bottom: 2px; line-height: 14px; }
        </style>65`;
    }
}

class ImeBar extends Base {
    markup() {
        const c = '#1f72c4';
        return `<style>
            :host { position: absolute; left: 709px; top: 14px; width: 186px; height: 23px; box-sizing: border-box; background: #f3f7fb; border: 1px solid #b6c8da;
                display: flex; align-items: center; color: ${c}; }
            svg { display: block; flex: none; }
            .s { position: absolute; left: -21px; top: -4px; }
            .z { width: 19px; margin-left: 12px; font-weight: 700; font-size: 14px; text-align: center; }
        </style>
        <span class="s">${icon('sogou', 28)}</span>
        <span class="z">中</span>
        <svg width="16" height="16" style="margin:0 9px 0 3px"><circle cx="4" cy="5" r="1.500" fill="none" stroke="${c}"/><path d="M11 8c2 0 2 3-1 5" fill="none" stroke="${c}" stroke-width="2"/></svg>
        <svg width="17" height="17" style="margin:0 3px"><circle cx="8.500" cy="8.500" r="7" fill="none" stroke="${c}" stroke-width="1.500"/><path d="M6 6v2M11 6v2M5 10c2 3 5 3 7 0" fill="none" stroke="${c}" stroke-width="1.300"/></svg>
        <svg width="14" height="18" style="margin:0 4px 0 2px"><rect x="4" y="1" width="6" height="10" rx="3" fill="${c}"/><path d="M2 8c0 5 10 5 10 0M7 13v4M3 17h8" fill="none" stroke="${c}"/></svg>
        <svg width="16" height="14" style="margin:0 5px 0 2px"><rect x=".5" y=".5" width="15" height="13" rx="1" fill="none" stroke="${c}"/><path d="M2 4h12M2 7h12M4 10h8" stroke="${c}" stroke-width="1.500" stroke-dasharray="1.500 .8"/></svg>
        <svg width="16" height="18" style="margin:0 2px 0 3px"><circle cx="8" cy="5" r="3.500" fill="#a8b8c4"/><path d="M2 16c0-8 12-8 12 0z" fill="#a8b8c4"/></svg>
        <svg width="16" height="16" style="margin:0 3px 0 1px"><path d="M5 1l3 1 3-1 4 3-2 3-1-1v9H4V6L3 7 1 4z" fill="${c}"/></svg>
        <svg width="16" height="16" style="margin:0 3px"><path d="M15 4l-3 2-2-2 2-3c-3-1-6 1-5 4L1 11c-1 2 2 5 4 3l5-6c3 1 6-1 5-4z" fill="${c}"/></svg>`;
    }
}

const SERIF = `font-family="Liberation Serif, ${CJK}, serif"`;

class RebarDialog extends Base {
    markup() {
        const cap = (s, x) => `<text x="${x}" y="466" font-size="40" fill="#fff" ${SERIF}>${s}</text>`;
        const unit = x => `<text transform="translate(${x} 466) scale(.78 1)" font-size="34" fill="#fff" ${SERIF}>mm</text>`;
        const lab = (s, x, y) => `<text x="${x}" y="${y}" font-size="34" fill="#fff" font-family="Liberation Sans, sans-serif">${s}</text>`;
        const stroke = 'fill="none" stroke="#fff" stroke-width="5"';
        const t1 = `<polyline points="93,320 150,348 150,288 235,268 235,340 293,357" ${stroke}/>
            ${lab('L1', 176, 327)}${lab('L2', 275, 318)}${lab('L3', 77, 374)}
            ${cap('I', 70)}${cap('型', 97)}${cap('单位', 162)}${cap(':', 250)}${unit(288)}`;
        const t2 = `<path d="M393 342L577 293M450 330v32M427 363h48M527 308v31M503 339h52" ${stroke}/>
            ${lab('L1', 443, 294)}${lab('L2', 575, 338)}${lab('L3', 477, 378)}
            ${cap('II', 368)}${cap('型', 401)}${cap('单位', 465)}${cap(':', 555)}${unit(590)}`;
        const t3 = `<path d="M696 345L886 281M765 325l-20 40M765 325l22 40M730 367h70M840 296l-15 39M840 296l15 39M802 336h73" ${stroke}/>
            ${lab('L1', 746, 290)}${lab('L3', 880, 326)}${lab('L2', 806, 383)}
            ${cap('III', 660)}${cap('型', 700)}${cap('单位', 770)}${cap(':', 860)}${unit(904)}`;
        const head = p => `<polygon points="${p}" fill="#fff"/>`;
        const green = (s, x, y) => `<text x="${x}" y="${y}" font-size="46" fill="#00e800" font-family="Liberation Sans, sans-serif">${s}</text>`;
        const big = `<polyline points="197,515 350,598 350,424 600,368 600,574 770,630" fill="none" stroke="#fff" stroke-width="6"/>
            <path d="M197 515L145 575M350 598L312 662M172 548L328 636M355 476L598 418M618 368H783M618 574H783M701 370V572" stroke="#fff" stroke-width="3" fill="none"/>
            ${head('170,548 228,560 205,590')}${head('328,636 282,595 268,628')}
            ${head('355,476 408,445 414,476')}${head('598,418 545,412 552,446')}
            ${head('701,370 684,422 720,422')}${head('701,572 682,514 720,514')}
            ${green('150', 174, 632)}${green('200', 445, 500)}${green('110', 720, 476)}
            <text y="876" font-size="48" fill="#fff" ${SERIF}><tspan x="308">I</tspan><tspan x="350">型</tspan><tspan x="442">单位</tspan><tspan x="560">:</tspan><tspan x="618" font-size="42">mm</tspan></text>`;
        return `<style>
            :host { position: absolute; left: 755px; top: 91px; width: 660px; height: 416px; box-sizing: border-box; background: #f0f0f0;
                border-top: 1px solid #3a9be8; border-bottom: 1px solid #6aa8dc; box-shadow: 0 0 8px rgba(0,0,0,.45); display: flex; flex-direction: column; color: #111; }
            ${SIM_CSS}
            .title { height: 25px; flex: none; background: #fff; line-height: 24px; padding-left: 3px; font-size: 12.500px; }
            .main { height: 349px; flex: none; display: grid; grid-template-columns: 321px 1fr; column-gap: 15px; padding: 6px 0 0 8px; box-sizing: border-box; }
            .left { display: flex; flex-direction: column; gap: 9px; }
            fieldset { margin: 0; padding: 0 0 5px 7px; border: 1px solid #dcdcdc; height: 145px; box-sizing: border-box; min-width: 0; }
            legend { padding: 0; line-height: 16px; height: 16px; }
            .pics { width: 305px; height: 123px; background: #bdbdbd; display: flex; gap: 4px; align-items: flex-start; }
            .pic { background: #000; height: 119px; flex: none; box-sizing: border-box; }
            .pic svg { display: block; }
            .pic.on { outline: 3px solid #f00; outline-offset: -3px; }
            .grid { height: 189px; box-sizing: border-box; background: #fff; border: 1px solid #ababab; padding: 1px; }
            .gh, .gr { display: grid; grid-template-columns: 21px 72px 114px; }
            .gh { height: 19px; }
            .gh div { background: linear-gradient(#fff, #ececec); border-right: 1px solid #c4c4c4; border-bottom: 1px solid #c4c4c4; }
            .gh .o { background: linear-gradient(#f9dea8, #f0c068); }
            .gr { height: 19px; line-height: 18px; border-bottom: 1px solid #c4c4c4; box-sizing: border-box; }
            .gr div { border-right: 1px solid #c4c4c4; padding-left: 2px; white-space: nowrap; overflow: hidden; }
            .gr .i { background: #ffd68b; }
            .gr .n { background: #d6e8f7; }
            .prev { margin-top: 3px; height: 340px; box-sizing: border-box; border: 2px solid #fff; outline: 1px solid #aaa; background: #000; overflow: hidden; }
            .prev svg { display: block; }
            .foot { flex: 1; display: flex; padding: 11px 0 0 7px; align-items: flex-start; }
            .tip { width: 491px; line-height: 22px; white-space: nowrap; overflow: hidden; }
            .bt { width: 72px; height: 23px; box-sizing: border-box; border: 1px solid #adadad; background: #e1e1e1; text-align: center; line-height: 21px; flex: none; }
        </style>
        <div class="title">马凳筋设置</div>
        <div class="main">
            <div class="left">
                <fieldset><legend>选择马凳筋图形</legend>
                    <div class="pics">
                        <div class="pic on" style="width:97px"><svg viewBox="48 144 291 357" width="97" height="119">${t1}</svg></div>
                        <div class="pic" style="width:97px"><svg viewBox="351 144 291 357" width="97" height="119">${t2}</svg></div>
                        <div class="pic" style="width:99px"><svg viewBox="654 144 297 357" width="99" height="119">${t3}</svg></div>
                    </div>
                </fieldset>
                <div class="grid">
                    <div class="gh"><div></div><div class="o"></div><div></div></div>
                    <div class="gr"><div class="i"></div><div class="n">马凳筋信息</div><div>${sim('Φ6@1000*1000')}</div></div>
                </div>
            </div>
            <div class="prev"><svg viewBox="18 18 1100 1014" width="367" height="338">${big}</svg></div>
        </div>
        <div class="foot">
            <div class="tip">${sim('一型钢筋输入格式:数量+级别+直径或级别+直径+间距*间距，如200B12或B12@1000*1000')}</div>
            <div class="bt">确定</div>
            <div class="bt" style="margin-left:15px">取消</div>
        </div>`;
    }
}

class RedFrame extends Base {
    markup() {
        const [x, y, w, h] = this.getAttribute('box').split(',');
        return `<style>
            :host { position: absolute; left: ${x}px; top: ${y}px; width: ${w}px; height: ${h}px; box-sizing: border-box; border: 7px solid #f00; pointer-events: none; }
        </style>`;
    }
}

customElements.define('title-bar', TitleBar);
customElements.define('menu-bar', MenuBar);
customElements.define('tool-row', ToolRow);
customElements.define('tool-chunk', ToolChunk);
customElements.define('tool-btn', ToolBtn);
customElements.define('tool-sep', ToolSep);
customElements.define('view-combo', ViewCombo);
customElements.define('floor-combo', FloorCombo);
customElements.define('work-area', WorkArea);
customElements.define('nav-panel', NavPanel);
customElements.define('comp-tree', CompTree);
customElements.define('comp-panel', CompPanel);
customElements.define('prop-panel', PropPanel);
customElements.define('status-bar', StatusBar);
customElements.define('win-taskbar', WinTaskbar);
customElements.define('score-badge', ScoreBadge);
customElements.define('ime-bar', ImeBar);
customElements.define('rebar-dialog', RebarDialog);
customElements.define('red-frame', RedFrame);
</script>
</body>
</html>
